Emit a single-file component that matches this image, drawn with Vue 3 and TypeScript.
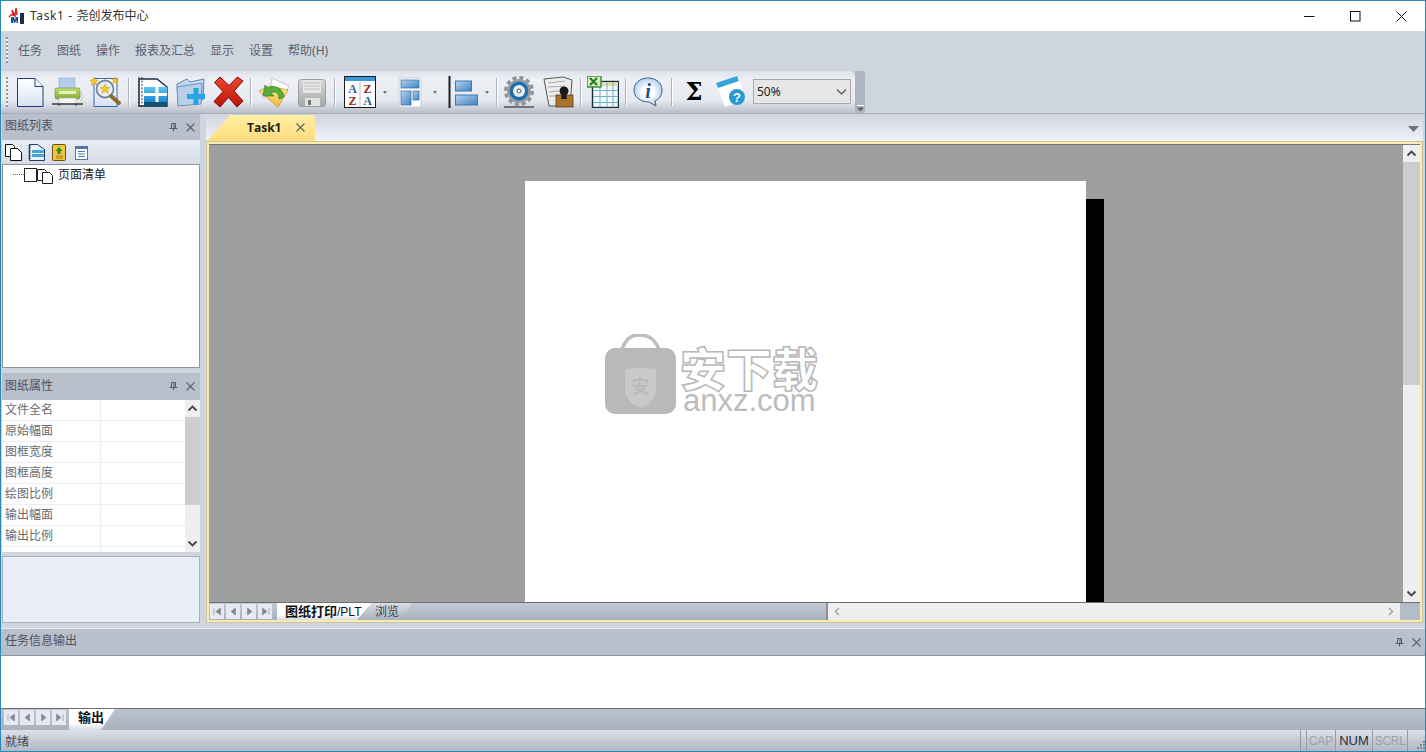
<template>
	<div class="window">
		<svg class="sprite" width="0" height="0" aria-hidden="true">
			<defs>
				<linearGradient id="paper" x1="0" y1="0" x2="0" y2="1"><stop offset="0" stop-color="#ffffff" /><stop offset="1" stop-color="#d6e2f2" /></linearGradient>
				<linearGradient id="blue" x1="0" y1="0" x2="1" y2="1"><stop offset="0" stop-color="#b7d3ef" /><stop offset="1" stop-color="#3f83c4" /></linearGradient>
				<linearGradient id="cyan" x1="0" y1="0" x2="0" y2="1"><stop offset="0" stop-color="#5fc4f2" /><stop offset="1" stop-color="#1c86d0" /></linearGradient>
				<linearGradient id="folder" x1="0" y1="0" x2="0" y2="1"><stop offset="0" stop-color="#d4e3f4" /><stop offset="1" stop-color="#82a8d4" /></linearGradient>
				<linearGradient id="red" x1="0" y1="0" x2="0" y2="1"><stop offset="0" stop-color="#f0452f" /><stop offset="1" stop-color="#b91208" /></linearGradient>
				<linearGradient id="yellow" x1="0" y1="0" x2="0" y2="1"><stop offset="0" stop-color="#fdeb8c" /><stop offset="1" stop-color="#f0b93c" /></linearGradient>
				<linearGradient id="green" x1="0" y1="0" x2="0" y2="1"><stop offset="0" stop-color="#c3dc6f" /><stop offset="1" stop-color="#7fab33" /></linearGradient>
				<linearGradient id="grey" x1="0" y1="0" x2="0" y2="1"><stop offset="0" stop-color="#d8d8d8" /><stop offset="1" stop-color="#a6a6a6" /></linearGradient>
				<radialGradient id="bubble"><stop offset="0.4" stop-color="#ffffff" /><stop offset="1" stop-color="#b5d2ee" /></radialGradient>
				<symbol id="pin" viewBox="0 0 9 9"><path d="M2.5 .5h4v5h-4zM5 .5v5M.5 5.5h8M4.5 5.5v3" fill="none" stroke="#555b66" /></symbol>
				<symbol id="close" viewBox="0 0 9 9"><path d="M.5 .5l8 8M8.5 .5l-8 8" fill="none" stroke="#5b616c" stroke-width="1.1" /></symbol>
			</defs>
		</svg>

		<header class="titlebar">
			<svg class="app-icon" width="18" height="18" viewBox="0 0 18 18">
				<path d="M1 10 Q3 7 5 8 L4 3 L7 9 L8 1 L9 8" fill="none" stroke="#d8232a" stroke-width="1.5" />
				<path d="M3 16V10h3l1 3 1-3h2v6H8.500v-3L7 16H6l-1-3v3z" fill="#1b4f92" />
				<rect x="12" y="6" width="4" height="11" fill="#1d2c55" />
			</svg>
			<span class="title"><span class="title-en">Task1 - </span>尧创发布中心</span>
			<div class="win-controls">
				<svg width="11" height="11" viewBox="0 0 11 11"><path d="M0 5.500h10.500" stroke="#111" fill="none" /></svg>
				<svg width="11" height="11" viewBox="0 0 11 11"><rect x=".5" y=".5" width="9.500" height="9.500" fill="none" stroke="#111" /></svg>
				<svg width="11" height="11" viewBox="0 0 11 11"><path d="M.5 .5l10 10M10.500 .5l-10 10" stroke="#111" fill="none" /></svg>
			</div>
		</header>

		<div class="commandbars">
			<nav class="menubar">
				<i class="grip" />
				<span v-for="m in menus" :key="m">{{ m }}</span>
			</nav>
			<div class="toolrow">
				<div class="toolbar">
					<i class="grip" />
					<!-- new -->
					<svg width="32" height="32" viewBox="0 0 32 32"><path d="M3.500 2.500H21l8 8v20H3.500z" fill="url(#paper)" stroke="#1f3c7c" /><path d="M21 2.500v8h8" fill="#f4f8fc" stroke="#1f3c7c" /></svg>
					<!-- print -->
					<svg width="32" height="32" viewBox="0 0 32 32"><rect x="7" y="2" width="16" height="12" fill="#b3cdea" stroke="#8fb0d6" stroke-width=".6" /><rect x="3" y="12" width="25" height="11" rx="2" fill="url(#green)" stroke="#6d8f33" stroke-width=".6" /><rect x="7" y="15" width="17" height="3" fill="#e4f0bd" /><rect x="7" y="22" width="17" height="6" fill="#f4f4f4" stroke="#aaa" stroke-width=".5" /><path d="M28 14l3 7-3 5" fill="none" stroke="#ccc" /><path d="M0 28h31" stroke="#111" stroke-width="1.200" /><path d="M7 28v2M24 28v2" stroke="#333" /></svg>
					<!-- preview -->
					<svg width="32" height="32" viewBox="0 0 32 32"><rect x="4" y="2.500" width="23" height="28" fill="url(#paper)" stroke="#3769a8" /><circle cx="15" cy="13" r="8.500" fill="#e6eef6" stroke="#78889a" stroke-width="1.800" /><path d="M15 8l1.500 3.200 3.500.4-2.600 2.300.8 3.400-3.200-1.800-3.200 1.800.8-3.400-2.600-2.300 3.500-.4z" fill="#f5c92c" stroke="#c2971a" stroke-width=".5" /><path d="M4 1l1.300 2.800 3 .3-2.300 2 .7 3L4 7.600 1.300 9.100l.7-3-2.300-2 3-.3z" fill="#f5c92c" stroke="#c2971a" stroke-width=".5" /><path d="M25 1l1 2.200 2.400.3-1.800 1.600.5 2.400L25 6.300l-2.100 1.200.5-2.400-1.800-1.600 2.400-.3z" fill="#f5c92c" stroke="#c2971a" stroke-width=".5" /><path d="M21 20l8 7" stroke="#8b6a2c" stroke-width="4" stroke-linecap="round" /></svg>
					<i class="sep sep-1" />
					<!-- table doc -->
					<svg width="33" height="32" viewBox="0 0 33 32"><path d="M3 3h18l10 8v19H3z" fill="#fff" stroke="#1a2f45" stroke-width="1.400" /><path d="M3 1v30M6 1v30" stroke="#1a2f45" stroke-dasharray="2 1.500" /><rect x="8" y="11" width="23" height="15" fill="url(#cyan)" /><path d="M8 18.500h23" stroke="#fff" stroke-width="3" /><path d="M21 11v15" stroke="#fff" stroke-width="3" /><rect x="8" y="26" width="23" height="5" fill="#14506f" /></svg>
					<!-- folder add -->
					<svg width="32" height="32" viewBox="0 0 32 32"><path d="M2 8l10-5 3 3 14-3-1 21-25 4z" fill="url(#folder)" stroke="#5c83b4" /><path d="M2 11l25-4-1 21-23 2z" fill="#b8cfe8" stroke="#6f93be" /><path d="M21 12v17M12 20.500h18" stroke="#27a3e6" stroke-width="5" /></svg>
					<!-- delete -->
					<svg width="31" height="32" viewBox="0 0 31 32"><path d="M1.500 6.500L7 1l9 8.500L24.500 1 30 5l-9 10 9 10-6 6-8.500-9.500L7 31 1 25.500 10 15.500z" fill="url(#red)" stroke="#7d0d07" stroke-width="1" stroke-linejoin="round" /></svg>
					<i class="sep sep-1" />
					<!-- open -->
					<svg width="32" height="32" viewBox="0 0 32 32"><path d="M14 2l17 8-7 12-12-6z" fill="#fff" stroke="#a9b3bc" stroke-width=".7" /><path d="M1 15l10-5 19 4-10 17z" fill="url(#yellow)" stroke="#b98e1d" stroke-width=".7" /><path d="M26 21C25 12 16 8 10 12L7 9 5 20l11 0-3-3C17 15 21 16 21 23z" fill="#57ad3a" stroke="#2c7a22" stroke-width=".6" /></svg>
					<!-- save -->
					<svg width="32" height="32" viewBox="0 0 32 32"><rect x="2.500" y="3.500" width="27" height="27" rx="3" fill="url(#grey)" stroke="#9c9c9c" /><rect x="7" y="4" width="18" height="13" fill="#e7e7e7" /><path d="M8 7h16M8 10h16M8 13h16" stroke="#bdbdbd" /><rect x="9" y="22" width="15" height="8" fill="#e3e3e3" /><rect x="12" y="24" width="3" height="5" fill="#777" /></svg>
					<i class="sep sep-3" />
					<!-- sort -->
					<svg width="32" height="32" viewBox="0 0 32 32"><rect x=".5" y=".5" width="31" height="31" fill="#fff" stroke="#1a1a1a" /><rect x="1" y="1" width="30" height="4" fill="#3a9ad9" /><path d="M16 6v25" stroke="#bbb" /><text class="az blue" x="8.500" y="17">A</text><text class="az red" x="23.500" y="17">Z</text><text class="az red" x="8.500" y="29">Z</text><text class="az blue" x="23.500" y="29">A</text></svg>
					<i class="caret" />
					<!-- layout -->
					<svg width="32" height="32" viewBox="0 0 32 32"><rect x="5" y="2" width="22" height="29" fill="#fff" stroke="#c4d0dc" /><rect x="7" y="4" width="18" height="8" fill="url(#blue)" stroke="#2f6aa5" stroke-width=".7" /><rect x="7" y="15" width="10" height="14" fill="url(#blue)" stroke="#2f6aa5" stroke-width=".7" /><rect x="19" y="15" width="6" height="9" fill="url(#blue)" stroke="#2f6aa5" stroke-width=".7" /></svg>
					<i class="caret" />
					<!-- align -->
					<svg width="34" height="32" viewBox="0 0 34 32"><path d="M5.500 0v32" stroke="#14202e" stroke-width="2" /><rect x="11.500" y="5" width="16" height="10" fill="url(#blue)" stroke="#3d78b2" /><rect x="11.500" y="19" width="22" height="10" fill="url(#blue)" stroke="#3d78b2" /></svg>
					<i class="caret" />
					<i class="sep" />
					<!-- gear -->
					<svg width="32" height="32" viewBox="0 0 32 32"><circle cx="16" cy="15" r="13" fill="none" stroke="#8f9296" stroke-width="4" stroke-dasharray="4 2.800" /><circle cx="16" cy="15" r="12" fill="#9a9ea3" /><circle cx="16" cy="15" r="9.500" fill="#1f6fae" /><circle cx="16" cy="15" r="6" fill="#e9eef3" /><circle cx="16" cy="15" r="2" fill="#fff" stroke="#555" /><path d="M1 31h30" stroke="#111" /></svg>
					<!-- lock -->
					<svg width="33" height="32" viewBox="0 0 33 32"><path d="M3 3l19-2 9 3-2 26H8z" fill="#ececec" stroke="#555" /><path d="M7 7l17-2M7 11l17-1M8 16l10-1M8 20l9 0" stroke="#aaa" /><rect x="15" y="19" width="17" height="12" fill="#a9742a" stroke="#4b3210" stroke-width=".7" /><circle cx="23" cy="15" r="4.500" fill="#1a1a1a" /><path d="M21 17h4l1 6h-6z" fill="#1a1a1a" /></svg>
					<i class="sep" />
					<!-- excel -->
					<svg width="32" height="32" viewBox="0 0 32 32"><rect x="5.500" y="5.500" width="26" height="26" fill="#f3f8fb" stroke="#12313d" stroke-width="1.400" /><rect x="6" y="6" width="25" height="4" fill="#e8d9a6" /><path d="M6 14.500h25M6 20.500h25M6 26.500h25M13 6v25M20 6v25M26 6v25" stroke="#6fb0cf" /><rect x="0" y="0" width="14" height="11" fill="#d6ecc0" stroke="#2f8a36" stroke-width="1.400" /><path d="M3 2l7 7M10 2l-7 7" stroke="#1f7d2a" stroke-width="2" /></svg>
					<i class="sep" />
					<!-- info -->
					<svg width="33" height="32" viewBox="0 0 33 32"><path d="M16 2c8 0 14 5 14 12 0 6-3 9-7 11l1 5-7-4C8 26 2 21 2 14 2 7 8 2 16 2z" fill="url(#bubble)" stroke="#3a5f8d" /><text class="info" x="16" y="22">i</text></svg>
					<i class="sep" />
					<span class="sigma">Σ</span>
					<!-- help -->
					<svg width="31" height="32" viewBox="0 0 31 32"><path d="M1 8L22 1l8 22-21 8z" fill="#fff" /><path d="M0 7L21 0l2 5L2 12z" fill="#36a4dc" /><circle cx="21" cy="21" r="8" fill="#2a97d2" /><text class="help" x="21" y="26">?</text></svg>
					<div class="combo">
						<span>50%</span>
						<svg width="11" height="6" viewBox="0 0 11 6"><path d="M1 .5l4.500 4.500L10 .5" fill="none" stroke="#555" stroke-width="1.200" /></svg>
					</div>
				</div>
				<div class="toolbar-end"><svg width="7" height="7" viewBox="0 0 7 7"><path d="M0 .5h7" stroke="#fff" /><path d="M0 2.500h7L3.500 6.500z" fill="#5d6470" /></svg></div>
			</div>
		</div>

		<div class="main">
			<aside class="side">
				<div class="pane-head">
					<span>图纸列表</span>
					<svg class="pin" width="9" height="9"><use href="#pin" /></svg>
					<svg class="x" width="9" height="9"><use href="#close" /></svg>
				</div>
				<div class="pane-tools">
					<svg width="17" height="17" viewBox="0 0 17 17"><path d="M.5 .5h7l2 2v10h-9z" fill="#fff" stroke="#111" /><path d="M5.500 4.500h7l4 4v8h-11z" fill="#fff" stroke="#111" /></svg>
					<svg width="17" height="17" viewBox="0 0 17 17"><path d="M1.500 .5h8l7 5v11h-15z" fill="#e8f2fa" stroke="#1b4060" /><rect x="4" y="6" width="12" height="7" fill="#4aa3d8" /><path d="M4 9.500h12" stroke="#fff" /><path d="M1.500 1v15" stroke="#1b4060" stroke-dasharray="1.500 1" stroke-width="2" /></svg>
					<svg width="17" height="17" viewBox="0 0 17 17"><rect x="2.500" y=".5" width="13" height="16" rx="1" fill="#f2c63e" stroke="#6b4d10" /><path d="M9 3l3.500 4h-2v3h-3V7h-2z" fill="#2f8a2d" /><path d="M6 12h7M6 14h7" stroke="#a57f1b" /></svg>
					<svg width="17" height="17" viewBox="0 0 17 17"><rect x="2.500" y="2.500" width="12" height="13" fill="#fff" stroke="#5278a8" /><rect x="3" y="3" width="11" height="2" fill="#5278a8" /><path d="M5 7.500h7M5 10h7M5 12.500h7" stroke="#5278a8" /></svg>
				</div>
				<div class="tree">
					<i class="tree-line" />
					<i class="tree-box" />
					<svg width="17" height="16" viewBox="0 0 17 16"><path d="M.5 1.500h7l2 2v9h-9z" fill="#fff" stroke="#222" /><path d="M5.500 4.500h7l3 3v8h-10z" fill="#fff" stroke="#222" /></svg>
					<span>页面清单</span>
				</div>
				<div class="pane-head second">
					<span>图纸属性</span>
					<svg class="pin" width="9" height="9"><use href="#pin" /></svg>
					<svg class="x" width="9" height="9"><use href="#close" /></svg>
				</div>
				<div class="props">
					<div class="prop-rows">
						<div v-for="p in props" :key="p" class="prop-row"><span>{{ p }}</span><i /></div>
						<div class="prop-row blank"><span /><i /></div>
					</div>
					<div class="vscroll small">
						<svg width="11" height="7" viewBox="0 0 11 7"><path d="M1.500 5.500l4-4 4 4" fill="none" stroke="#444" stroke-width="1.800" /></svg>
						<i class="thumb" />
						<svg class="bottom" width="11" height="7" viewBox="0 0 11 7"><path d="M1.500 1.500l4 4 4-4" fill="none" stroke="#444" stroke-width="1.800" /></svg>
					</div>
				</div>
				<div class="desc" />
			</aside>

			<section class="doc">
				<div class="doc-tabs">
					<div class="doc-tab">
						<span>Task1</span>
						<svg width="9" height="9"><use href="#close" /></svg>
					</div>
					<svg class="doc-menu" width="11" height="6" viewBox="0 0 11 6"><path d="M0 0h11L5.500 6z" fill="#6c727c" /></svg>
				</div>
				<div class="frame">
					<div class="frame-body">
						<div class="canvas">
							<div class="sheet" />
							<div class="watermark">
								<svg width="71" height="80" viewBox="0 0 71 80">
									<path d="M17 15C22 3 27 1 35 1s14 3 19 14" fill="none" stroke="#bdbdbd" stroke-width="3.500" />
									<rect y="14" width="71" height="66" rx="10" fill="#b9b9b9" />
									<path d="M20 35q16-3 31 0v20q0 13-15.500 19Q20 68 20 55z" fill="#c9c9c9" />
									<text class="wm-shield" x="35.500" y="59">安</text>
								</svg>
								<div class="wm-text">
									<strong>安下载</strong>
									<em>anxz.com</em>
								</div>
							</div>
						</div>
						<div class="vscroll">
							<svg width="11" height="7" viewBox="0 0 11 7"><path d="M1.500 5.500l4-4 4 4" fill="none" stroke="#444" stroke-width="1.800" /></svg>
							<i class="thumb" />
							<svg class="bottom" width="11" height="7" viewBox="0 0 11 7"><path d="M1.500 1.500l4 4 4-4" fill="none" stroke="#444" stroke-width="1.800" /></svg>
						</div>
					</div>
					<div class="frame-foot">
						<div class="sheet-nav">
							<button v-for="n in nav" :key="n"><svg width="9" height="9" viewBox="0 0 9 9"><path :d="n" fill="#7f8894" stroke="#7f8894" stroke-width=".6" /></svg></button>
						</div>
						<div class="sheet-tab on">图纸打印<span class="latin">/PLT</span></div>
						<div class="sheet-tab off">浏览</div>
						<div class="sheet-fill" />
						<div class="hscroll">
							<svg width="6" height="9" viewBox="0 0 6 9"><path d="M5 1L1.500 4.500 5 8" fill="none" stroke="#a0a0a0" stroke-width="1.400" /></svg>
							<svg width="6" height="9" viewBox="0 0 6 9"><path d="M1 1l3.500 3.500L1 8" fill="none" stroke="#a0a0a0" stroke-width="1.400" /></svg>
						</div>
						<div class="corner" />
					</div>
				</div>
			</section>
		</div>

		<section class="output">
			<div class="pane-head wide">
				<span>任务信息输出</span>
				<svg class="pin" width="9" height="9"><use href="#pin" /></svg>
				<svg class="x" width="9" height="9"><use href="#close" /></svg>
			</div>
			<div class="output-body" />
			<div class="output-tabs">
				<div class="sheet-nav">
					<button v-for="n in nav" :key="n"><svg width="9" height="9" viewBox="0 0 9 9"><path :d="n" fill="#7f8894" stroke="#7f8894" stroke-width=".6" /></svg></button>
				</div>
				<div class="sheet-tab output-tab">输出</div>
			</div>
		</section>

		<footer class="status">
			<span class="ready">就绪</span>
			<i class="divider gap" />
			<i class="divider" />
			<span class="key dim cap">CAP</span>
			<i class="divider" />
			<span class="key num">NUM</span>
			<i class="divider" />
			<span class="key dim scrl">SCRL</span>
			<i class="divider" />
			<svg class="resize" width="9" height="9" viewBox="0 0 9 9"><path d="M7 1h2v2H7zM4 4h2v2H4zM7 4h2v2H7zM1 7h2v2H1zM4 7h2v2H4zM7 7h2v2H7z" fill="#7f8792" /></svg>
		</footer>
	</div>
</template>

<script setup lang="ts">
const menus: string[] = ['任务', '图纸', '操作', '报表及汇总', '显示', '设置', '帮助(H)'];
const props: string[] = ['文件全名', '原始幅面', '图框宽度', '图框高度', '绘图比例', '输出幅面', '输出比例'];
const nav: string[] = [
	'M1 1v7M7.500 1L3 4.500 7.500 8z',
	'M6.500 1L2 4.500 6.500 8z',
	'M2.500 1L7 4.500 2.500 8z',
	'M8 1v7M1.500 1L6 4.500 1.500 8z',
];
</script>

<style>
html, body {
	margin: 0;
	overflow: hidden;
}
</style>

<style scoped>
.window {
	box-sizing: border-box;
	display: flex;
	flex-direction: column;
	width: 1426px;
	height: 752px;
	border: 1px solid #2a86b4;
	background: #cfd5df;
	font: 12px "Noto Sans", "Noto Sans CJK SC", sans-serif;
	color: #5a606c;
	overflow: hidden;
}

.sprite {
	position: absolute;
}

i {
	display: block;
	font-style: normal;
}

svg {
	display: block;
	flex: none;
}

.titlebar {
	display: flex;
	align-items: center;
	height: 30px;
	padding-left: 7px;
	background: #fff;
	flex: none;
}

.title {
	margin: -2px 0 0 4px;
	color: #333;
}

.title-en {
	letter-spacing: .6px;
}

.win-controls {
	display: flex;
	gap: 35px;
	margin-left: auto;
	margin-right: 18px;
}

.commandbars {
	flex: none;
	height: 83px;
	border-bottom: 1px solid #a9afba;
	box-sizing: border-box;
}

.menubar {
	display: flex;
	align-items: center;
	gap: 15px;
	height: 40px;
	padding: 0 0 2px 5px;
	box-sizing: border-box;
}

.menubar .grip {
	height: 26px;
	margin-right: -5px;
}

.grip {
	width: 2px;
	height: 30px;
	background: repeating-linear-gradient(#8d939e 0 2px, #f2f4f8 2px 4px);
}

.toolrow {
	display: flex;
	height: 42px;
}

.toolbar {
	display: flex;
	align-items: center;
	gap: 6px;
	width: 854px;
	padding-left: 13px;
	box-sizing: border-box;
	position: relative;
	border-radius: 0 6px 4px 0;
	background: linear-gradient(#dee2ea, #eef0f5 20%, #e6e9ef 70%, #b9bfca);
}

.toolbar > .grip {
	position: absolute;
	left: 5px;
	top: 6px;
}

.toolbar-end {
	display: flex;
	align-items: flex-end;
	justify-content: center;
	width: 10px;
	padding-bottom: 1px;
	box-sizing: border-box;
	border-radius: 0 4px 4px 0;
	background: #aeb5c1;
}

.sep {
	width: 1px;
	height: 28px;
	background: #aeb4bf;
	box-shadow: 1px 0 0 #fff;
}

.sep-1 {
	margin-right: 1px;
}

.sep-3 {
	margin-right: 3px;
}

.caret {
	width: 0;
	height: 0;
	margin: 0 1px;
	border: 2.500px solid transparent;
	border-top: 3px solid #6d737e;
	border-bottom: 0;
}

.sigma {
	width: 32px;
	text-align: center;
	font: 700 24px/32px "DejaVu Serif", serif;
	color: #000;
}

.az {
	font: 700 12px "Liberation Serif", serif;
	text-anchor: middle;
}

.az.blue {
	fill: #245f9a;
}

.az.red {
	fill: #8c2a20;
}

.info {
	font: italic 700 20px "Liberation Serif", serif;
	fill: #1c4ea0;
	text-anchor: middle;
}

.help {
	font: 700 13px "Liberation Sans", sans-serif;
	fill: #fff;
	text-anchor: middle;
}

.combo {
	display: flex;
	align-items: center;
	justify-content: space-between;
	width: 98px;
	height: 25px;
	margin-top: -1px;
	padding: 0 3px;
	box-sizing: border-box;
	border: 1px solid #a9a9a9;
	background: #e6e6e6;
	color: #222;
}

.main {
	display: flex;
	flex: 1;
	min-height: 0;
	padding-left: 1px;
	gap: 6px;
}

.side {
	display: flex;
	flex-direction: column;
	width: 198px;
	flex: none;
}

.pane-head {
	display: flex;
	align-items: center;
	height: 26px;
	flex: none;
	padding-left: 3px;
	background: #b9c0cc;
	color: #4d535e;
}

.pane-head > span {
	margin-top: -5px;
}

.pane-head.second > span {
	margin-top: -3px;
}

.pane-head.second {
	height: 27px;
	margin-top: 5px;
}

.pane-head .pin {
	margin-left: auto;
}

.pane-head .x {
	margin: 0 5px 0 8px;
}

.pane-tools {
	display: flex;
	align-items: center;
	gap: 5.500px;
	height: 25px;
	padding-left: 3px;
	box-sizing: border-box;
	border-bottom: 1px solid #8f95a0;
	background: linear-gradient(#e9edf4, #d6dbe5);
	flex: none;
}

.tree {
	display: flex;
	align-items: flex-start;
	height: 203px;
	box-sizing: border-box;
	padding: 3px 0 0 10px;
	background: #fff;
	border: solid #8f95a0;
	border-width: 0 1px 1px;
	color: #222;
	flex: none;
}

.tree-line {
	width: 11px;
	margin-top: 6px;
	border-top: 1px dotted #666;
}

.tree-box {
	width: 11px;
	height: 12px;
	border: 1px solid #222;
}

.tree span {
	margin: -3px 0 0 4px;
}

.props {
	display: flex;
	height: 152px;
	flex: none;
	background: #fff;
}

.prop-rows {
	flex: 1;
	overflow: hidden;
}

.prop-row {
	display: flex;
	height: 21px;
	box-sizing: border-box;
	border-bottom: 1px solid #eceef1;
	line-height: 20px;
	color: #6b6b6b;
}

.prop-row.blank {
	border: 0;
}

.prop-row span {
	width: 95px;
	padding-left: 3px;
	border-right: 1px solid #eceef1;
}

.vscroll {
	position: relative;
	display: flex;
	flex-direction: column;
	align-items: center;
	width: 17px;
	padding-top: 5px;
	box-sizing: border-box;
	background: #efefef;
	flex: none;
}

.vscroll .thumb {
	width: 100%;
	height: 223px;
	margin-top: 5px;
	background: #cdcdcd;
}

.vscroll .bottom {
	position: absolute;
	bottom: 5px;
}

.vscroll.small {
	width: 15px;
}

.vscroll.small .thumb {
	height: 88px;
}

.desc {
	height: 67px;
	margin-top: 4px;
	box-sizing: border-box;
	border: 1px solid #aab1bd;
	background: #e8edf7;
	flex: none;
}

.doc {
	display: flex;
	flex-direction: column;
	width: 1217px;
	flex: none;
}

.doc-tabs {
	display: flex;
	align-items: flex-end;
	height: 27px;
	background: linear-gradient(#cfd5df, #eff2f7);
	flex: none;
}

.doc-tab {
	display: flex;
	align-items: center;
	width: 108px;
	height: 26px;
	margin-left: 1px;
	padding: 0 0 2px 40px;
	box-sizing: border-box;
	clip-path: polygon(0 100%, 23px 0, calc(100% - 2px) 0, 100% 2px, 100% 100%);
	background: linear-gradient(#fff0a2, #fedb7e);
	font: 700 12px "Open Sans", sans-serif;
	color: #222;
}

.doc-tab svg {
	margin-left: 15px;
}

.doc-menu {
	margin: 0 4px 9px auto;
}

.frame {
	display: flex;
	flex-direction: column;
	height: 482px;
	box-sizing: border-box;
	border: 3px solid #f6ebb4;
	outline: 1px solid #cfc59c;
	outline-offset: -1px;
	background: #efefef;
	flex: none;
}

.frame-body {
	display: flex;
	height: 458px;
	border-top: 1px solid #777;
	box-sizing: border-box;
}

.canvas {
	position: relative;
	flex: 1;
	padding: 36px 0 0 316px;
	background: #9f9f9f;
	overflow: hidden;
}

.sheet {
	width: 561px;
	height: 520px;
	background: #fff;
	box-shadow: 18px 18px 0 #000;
}

.watermark {
	position: absolute;
	left: 396px;
	top: 189px;
	display: flex;
	gap: 4px;
}

.wm-shield {
	font: 700 18px "Noto Sans CJK SC", sans-serif;
	fill: #b9b9b9;
	text-anchor: middle;
}

.wm-text {
	display: flex;
	flex-direction: column;
	width: 140px;
}

.wm-text strong {
	font: 900 46px/42px "Noto Sans CJK SC", sans-serif;
	color: #fff;
	-webkit-text-stroke: 1.500px #b8b8b8;
	margin-top: 11px;
	white-space: nowrap;
}

.wm-text em {
	font: 31px/24px "Liberation Sans", sans-serif;
	color: #bcbcbc;
	margin: 2px 0 0 3px;
}

.frame-foot {
	display: flex;
	flex: 1;
	align-items: stretch;
	border-top: 1px solid #6f6f6f;
	background: linear-gradient(#c4cad4, #a9b1bd);
}

.sheet-nav {
	display: flex;
	gap: 2px;
	padding: 1px 0 0 1px;
}

.sheet-nav button {
	display: flex;
	align-items: center;
	justify-content: center;
	width: 14px;
	height: 15px;
	padding: 0;
	border: 0;
	background: #e6e9f0;
}

.sheet-tab {
	font: 700 13px/16px "Noto Sans CJK SC", sans-serif;
	color: #111;
	white-space: nowrap;
}

.latin {
	font: 12px/16px "Liberation Sans", sans-serif;
}

.sheet-tab.on {
	width: 95px;
	margin-left: 5px;
	padding-left: 8px;
	box-sizing: border-box;
	background: linear-gradient(#fff 70%, #d4d8df);
	clip-path: polygon(0 0, 100% 0, calc(100% - 15px) 100%, 0 100%);
}

.sheet-tab.off {
	width: 55px;
	margin-left: -14px;
	padding-left: 17px;
	box-sizing: border-box;
	font: 400 12px/16px "Noto Sans CJK SC", sans-serif;
	color: #3f444c;
	background: linear-gradient(#d9dde4, #aab1bc);
	clip-path: polygon(0 100%, 14px 0, 100% 0, calc(100% - 14px) 100%);
}

.sheet-fill {
	flex: 1;
	border-right: 2px solid #8a8f98;
}

.hscroll {
	display: flex;
	align-items: center;
	justify-content: space-between;
	width: 572px;
	padding: 0 6px;
	box-sizing: border-box;
	background: #efefef;
	flex: none;
}

.corner {
	width: 20px;
	flex: none;
	background: #b4bcc8;
}

.output {
	display: flex;
	flex-direction: column;
	height: 102px;
	border-top: 1px solid #e8ecf3;
	box-sizing: border-box;
	flex: none;
}

.pane-head.wide {
	height: 26px;
	padding-left: 4px;
	border-bottom: 1px solid #8f95a0;
	box-sizing: content-box;
}

.pane-head.wide .x {
	margin-right: 4px;
}

.output-body {
	flex: 1;
	background: #fff;
}

.output-tabs {
	display: flex;
	height: 22px;
	border-top: 1px solid #6f6f6f;
	box-sizing: border-box;
	background: linear-gradient(#bcc3cf, #a9b1bd);
	flex: none;
}

.output-tabs .sheet-nav {
	padding-left: 3px;
}

.output-tab {
	width: 46px;
	margin-left: 3px;
	padding-left: 9px;
	box-sizing: border-box;
	background: linear-gradient(#fff 70%, #d4d8df);
	clip-path: polygon(0 0, 100% 0, calc(100% - 14px) 100%, 0 100%);
}

.status {
	display: flex;
	align-items: center;
	height: 21px;
	flex: none;
	background: linear-gradient(#dfe2e8, #c4c9d2 50%, #b3b9c4);
	color: #454a54;
}

.ready {
	margin-left: 4px;
	margin-right: auto;
}

.divider {
	width: 1px;
	height: 100%;
	background: #969ca7;
}

.divider.gap {
	margin-right: 5px;
}

.key {
	font: 13px "Liberation Sans", sans-serif;
	color: #2a2e36;
	text-align: center;
	white-space: nowrap;
}

.key.dim {
	font-size: 12px;
	color: #9ba1ab;
}

.cap {
	width: 28px;
}

.num {
	width: 36px;
}

.scrl {
	width: 34px;
	letter-spacing: -.4px;
}

.resize {
	margin: 8px 0 0 8px;
}
</style>
